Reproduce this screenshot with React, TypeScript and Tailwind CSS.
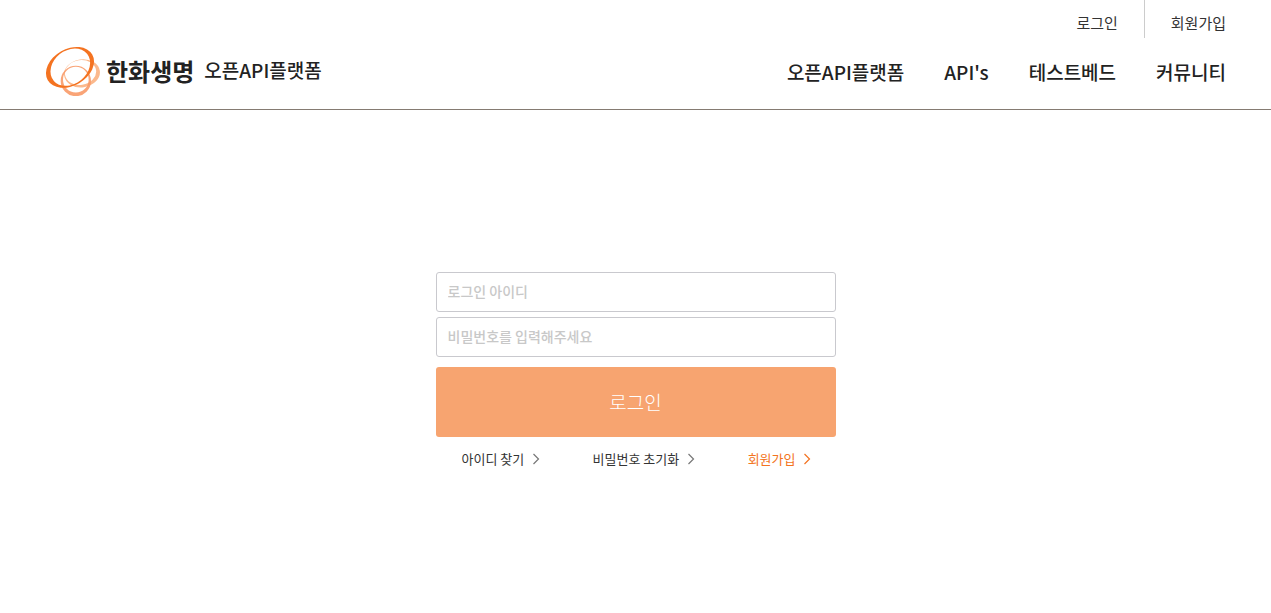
const utilityLinks = ["로그인", "회원가입"];

const menuItems = ["오픈API플랫폼", "API's", "테스트베드", "커뮤니티"];

const helpLinks = [
  { label: "아이디 찾기", accent: false },
  { label: "비밀번호 초기화", accent: false },
  { label: "회원가입", accent: true },
];

function LogoMark() {
  return (
    <svg className="h-[50px] w-[55px]" viewBox="15 17 165 150" fillRule="evenodd" aria-hidden="true">
      <path
        fill="#fbb98d"
        transform="rotate(-8 126 99)"
        d="M72 99a54 42 0 1 0 108 0a54 42 0 1 0 -108 0ZM75 96a47 37 0 1 0 94 0a47 37 0 1 0 -94 0Z"
      />
      <path
        fill="#f89a68"
        fillOpacity="0.9"
        d="M62 122a45.500 45.500 0 1 0 91 0a45.500 45.500 0 1 0 -91 0ZM69 118a38.500 38.500 0 1 0 77 0a38.500 38.500 0 1 0 -77 0Z"
      />
      <path
        fill="#f47321"
        transform="rotate(-30 90 81)"
        d="M13 81a77 55 0 1 0 154 0a77 55 0 1 0 -154 0ZM27 81a64 50 -8 1 0 128 0a64 50 -8 1 0 -128 0Z"
      />
    </svg>
  );
}

function Chevron() {
  return (
    <svg className="h-3 w-2" viewBox="0 0 8 12" fill="none" stroke="currentColor" strokeWidth="1.2" aria-hidden="true">
      <path d="M1.500 1 6.500 6l-5 5" />
    </svg>
  );
}

function Header() {
  return (
    <header className="border-b border-[#857b72] px-[45px]">
      <div className="flex h-[38px] justify-end text-[15px] text-[#333]">
        {utilityLinks.map((label) => (
          <a
            key={label}
            href="#"
            className="flex items-center border-l border-[#ccc] px-[26px] pt-2 first:border-l-0 last:pr-0"
          >
            {label}
          </a>
        ))}
      </div>
      <div className="flex h-[71px] items-center justify-between pb-1.5">
        <a href="#" className="flex items-center text-[#222]">
          <LogoMark />
          <span className="ml-1.5 text-2xl font-bold">한화생명</span>
          <span className="ml-2.5 text-[19px] font-medium">오픈API플랫폼</span>
        </a>
        <nav className="flex gap-10 pt-1 text-[19px] font-medium text-[#222]">
          {menuItems.map((label) => (
            <a key={label} href="#">
              {label}
            </a>
          ))}
        </nav>
      </div>
    </header>
  );
}

function LoginForm() {
  return (
    <form className="w-full max-w-[400px]" onSubmit={(e) => e.preventDefault()}>
      <div className="flex flex-col gap-[5px]">
        <input
          type="text"
          aria-label="로그인 아이디"
          placeholder="로그인 아이디"
          className="h-10 w-full rounded-[3px] border border-[#c9c9ce] px-[11px] pb-0.5 text-sm font-medium placeholder:text-[#c8c8c8]"
        />
        <input
          type="password"
          aria-label="비밀번호"
          placeholder="비밀번호를 입력해주세요"
          className="h-10 w-full rounded-[3px] border border-[#c9c9ce] px-[11px] pb-0.5 text-sm font-medium placeholder:text-[#c8c8c8]"
        />
      </div>
      <button
        type="submit"
        className="mt-[10px] h-[70px] w-full rounded-[3px] bg-[#f7a470] text-[19px] font-light text-white"
      >
        로그인
      </button>
      <div className="mt-3 flex justify-between pr-6 pl-[26px] text-[13px] leading-5">
        {helpLinks.map(({ label, accent }) => (
          <a
            key={label}
            href="#"
            className={`flex items-center gap-2 ${accent ? "text-[#f37321]" : "text-[#333]"}`}
          >
            {label}
            <span className={accent ? "" : "text-[#777]"}>
              <Chevron />
            </span>
          </a>
        ))}
      </div>
    </form>
  );
}

export default function App() {
  return (
    <div className="flex min-h-screen flex-col bg-white font-['Noto_Sans_CJK_KR',sans-serif]">
      <Header />
      <main className="flex flex-1 justify-center px-5 pt-[162px] pb-10">
        <LoginForm />
      </main>
    </div>
  );
}
